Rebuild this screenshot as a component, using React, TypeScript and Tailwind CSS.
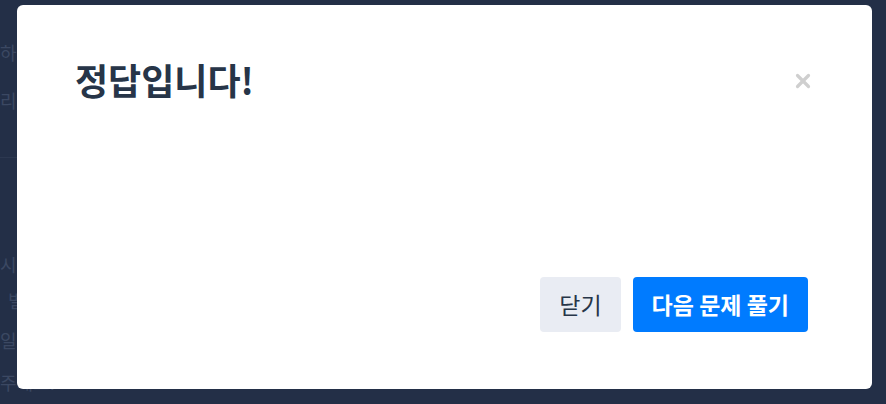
import { X } from 'lucide-react';

const font = { fontFamily: '"Noto Sans CJK KR", "Noto Sans", sans-serif' };

export default function App() {
  return (
    <div className="relative h-[404px] w-[886px] overflow-hidden bg-[#232f47]" style={font}>
      {/* Dimmed page behind the modal */}
      <div className="flex h-full flex-col text-[18px] text-[#3b4862]">
        <div className="mt-[38px] leading-[28px]">하기</div>
        <div className="mt-[20px] leading-[28px]">리라</div>
        <div className="mt-[43px] h-px w-[60px] bg-[#2c3850]" />
        <div className="mt-[92px] leading-[28px]">시트</div>
        <div className="ml-[8px] mt-[8px] leading-[28px]">별</div>
        <div className="mt-[12px] leading-[28px]">일람</div>
        <div className="mt-[14px] leading-[28px]">주세요.</div>
      </div>

      {/* Modal */}
      <div className="absolute left-[17px] top-[5px] flex h-[384px] w-[855px] flex-col rounded-[6px] bg-white">
        <div className="flex items-start justify-between pl-[58px] pr-[58px] pt-[48px]">
          <h1 className="text-[36px] font-bold leading-[52px] text-[#273548]">정답입니다!</h1>
          <button className="mt-[17px] text-[#cfcfcf]">
            <X size={22} strokeWidth={3.5} />
          </button>
        </div>
        <div className="flex-1" />
        <div className="flex justify-end gap-[12px] pb-[57px] pr-[64px]">
          <button className="h-[55px] rounded-[4px] bg-[#e9ecf3] px-[19px] text-[23px] text-[#273548]">
            닫기
          </button>
          <button className="h-[55px] rounded-[4px] bg-[#007bff] px-[19px] text-[23px] font-bold text-white">
            다음 문제 풀기
          </button>
        </div>
      </div>
    </div>
  );
}
